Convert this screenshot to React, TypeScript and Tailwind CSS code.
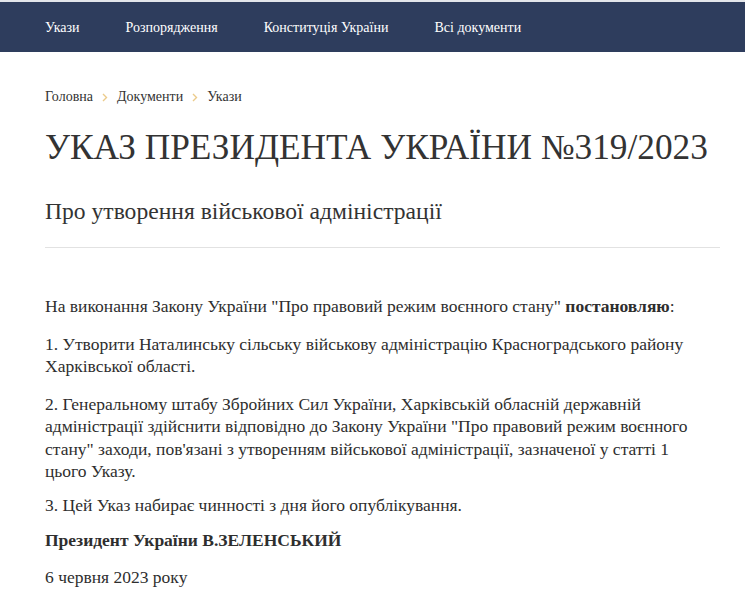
import React from "react";

const serif = { fontFamily: '"Liberation Serif", "Times New Roman", serif' };

function Chevron() {
  return (
    <svg width="6" height="9" viewBox="0 0 6 9" className="shrink-0">
      <path d="M1 1l3.5 3.5L1 8" fill="none" stroke="#ebcb8b" strokeWidth="1.4" />
    </svg>
  );
}

export default function App() {
  return (
    <div className="min-h-screen bg-white text-[#333]" style={serif}>
      <div className="h-[2px] bg-[#e3e6ea]" />
      <nav className="h-[50px] bg-[#2e3d5d] flex items-center gap-[46px] px-[45px] text-white text-[14px]">
        <span>Укази</span>
        <span>Розпорядження</span>
        <span>Конституція України</span>
        <span>Всі документи</span>
      </nav>
      <main className="pl-[45px] pr-[20px]">
        <div className="pt-[35px] flex items-center gap-[9px] text-[14px] leading-[20px] text-[#333]">
          <span>Головна</span>
          <Chevron />
          <span>Документи</span>
          <Chevron />
          <span>Укази</span>
        </div>
        <h1 className="mt-[20px] text-[35.3px] leading-[42px] font-normal whitespace-nowrap">
          УКАЗ ПРЕЗИДЕНТА УКРАЇНИ №319/2023
        </h1>
        <h2 className="mt-[27px] text-[23.6px] leading-[30px] font-normal">
          Про утворення військової адміністрації
        </h2>
        <hr className="mt-[21px] mr-[5px] border-0 border-t border-[#e2e2e2]" />
        <div className="pt-[47px] text-[17.5px] leading-[22.5px] text-[#2e2e2e]">
          <p>
            На виконання Закону України "Про правовий режим воєнного стану" <b>постановляю</b>:
          </p>
          <p className="mt-[15px]">1. Утворити Наталинську сільську військову адміністрацію Красноградського району Харківської області.</p>
          <p className="mt-[15px]">
            2. Генеральному штабу Збройних Сил України, Харківській обласній державній адміністрації здійснити відповідно до Закону України "Про правовий режим воєнного стану" заходи, пов'язані з утворенням військової адміністрації, зазначеної у статті 1
            <br />
            цього Указу.
          </p>
          <p className="mt-[11px]">3. Цей Указ набирає чинності з дня його опублікування.</p>
          <p className="mt-[12.5px]"><b>Президент України В.ЗЕЛЕНСЬКИЙ</b></p>
          <p className="mt-[14.5px]">6 червня 2023 року</p>
        </div>
      </main>
    </div>
  );
}
